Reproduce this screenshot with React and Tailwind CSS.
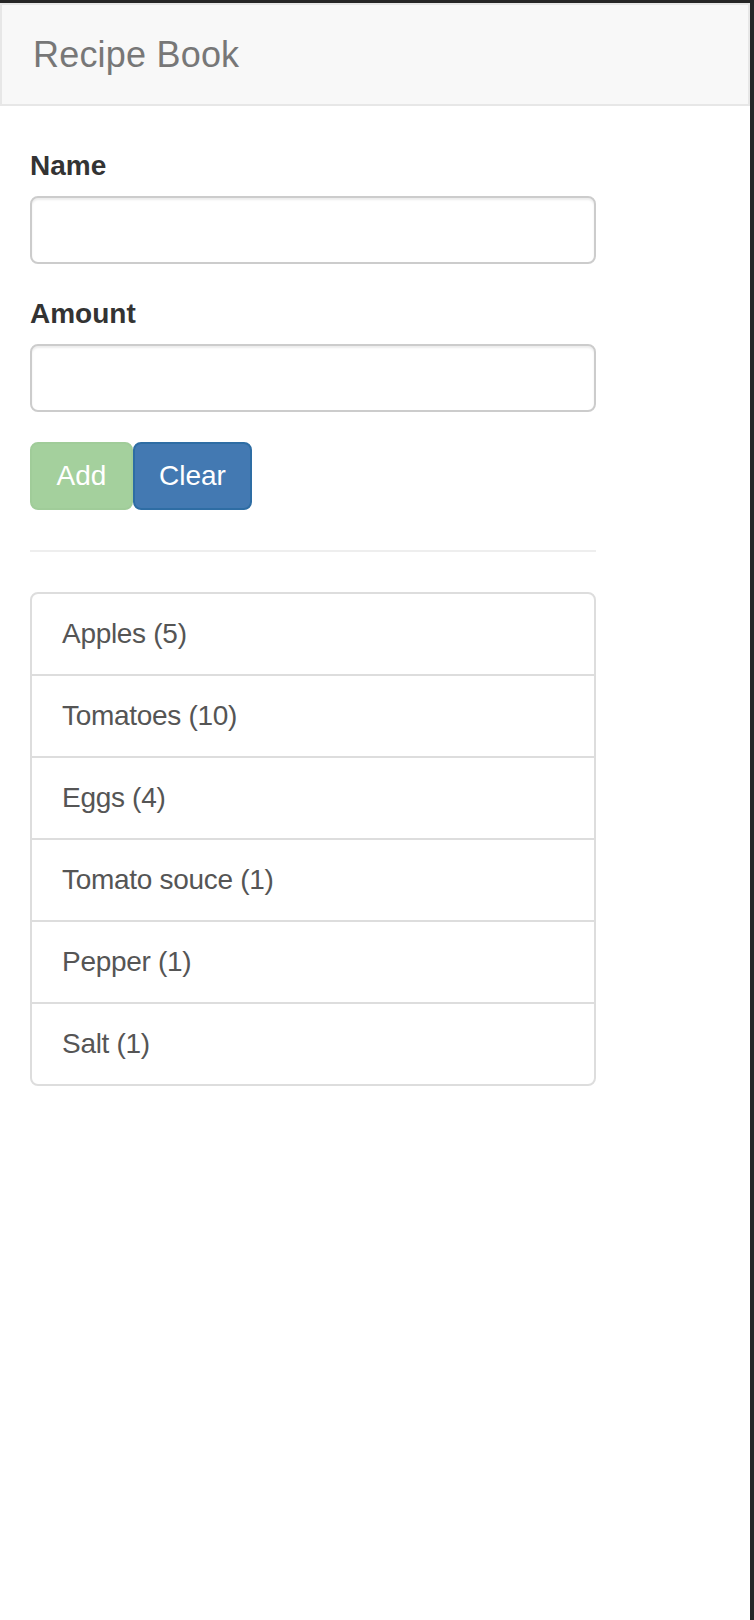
import React, { useState } from "react";

const items = [
  { name: "Apples", amount: 5 },
  { name: "Tomatoes", amount: 10 },
  { name: "Eggs", amount: 4 },
  { name: "Tomato souce", amount: 1 },
  { name: "Pepper", amount: 1 },
  { name: "Salt", amount: 1 },
];

const App = () => {
  const [name, setName] = useState("");
  const [amount, setAmount] = useState("");

  return (
    <div
      className="min-h-[1620px] bg-[#262626] pt-[3px] pr-[4px]"
      style={{ fontFamily: '"Liberation Sans", Arial, sans-serif' }}
    >
      <div className="min-h-[1617px] bg-white">
        {/* navbar */}
        <div className="h-[103px] border-2 border-[#e7e7e7] bg-[#f8f8f8] pl-[31px] pt-[30px]">
          <span className="text-[36px] leading-[40px] text-[#777] tracking-[0.2px]">Recipe Book</span>
        </div>

        <div className="pl-[30px] pt-[40px] w-[596px]">
          <form onSubmit={(e) => e.preventDefault()}>
            <div className="mb-[30px]">
              <label className="block mb-[10px] text-[28px] leading-[40px] font-bold text-[#333]">Name</label>
              <input
                type="text"
                value={name}
                onChange={(e) => setName(e.target.value)}
                className="block w-[566px] h-[68px] px-[24px] border-2 border-[#ccc] rounded-[8px] text-[28px] text-[#555] shadow-[inset_0_2px_2px_rgba(0,0,0,0.075)] outline-none"
              />
            </div>
            <div className="mb-[30px]">
              <label className="block mb-[10px] text-[28px] leading-[40px] font-bold text-[#333]">Amount</label>
              <input
                type="text"
                value={amount}
                onChange={(e) => setAmount(e.target.value)}
                className="block w-[566px] h-[68px] px-[24px] border-2 border-[#ccc] rounded-[8px] text-[28px] text-[#555] shadow-[inset_0_2px_2px_rgba(0,0,0,0.075)] outline-none"
              />
            </div>
            <div className="flex">
              <button
                type="submit"
                disabled
                className="h-[68px] w-[103px] border-2 border-[#a0cc99] bg-[#a4d09d] rounded-[8px] text-[28px] leading-[40px] text-white"
              >
                Add
              </button>
              <button
                type="button"
                onClick={() => {
                  setName("");
                  setAmount("");
                }}
                className="h-[68px] w-[119px] border-2 border-[#2e6da4] bg-[#4379b2] rounded-[8px] text-[28px] leading-[40px] text-white"
              >
                Clear
              </button>
            </div>
          </form>

          <hr className="my-[40px] border-0 border-t-2 border-[#eee]" />

          <ul>
            {items.map((item, i) => (
              <li
                key={item.name}
                className={
                  "px-[30px] py-[20px] border-2 border-[#ddd] text-[28px] leading-[40px] text-[#555] tracking-[-0.3px] " +
                  (i > 0 ? "-mt-[2px] " : "rounded-t-[8px] ") +
                  (i === items.length - 1 ? "rounded-b-[8px]" : "")
                }
              >
                {item.name} ({item.amount})
              </li>
            ))}
          </ul>
        </div>
      </div>
    </div>
  );
};

export default App;
